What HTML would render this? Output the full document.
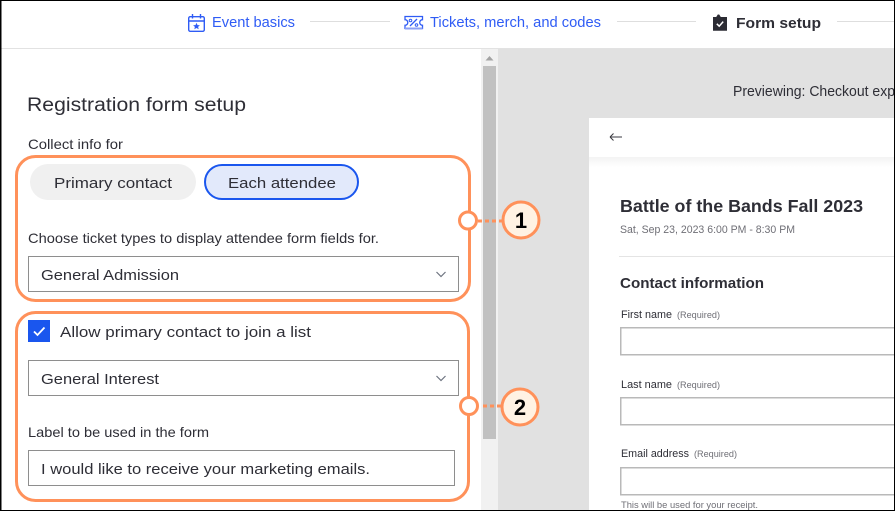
<!DOCTYPE html>
<html lang="en">
<head>
<meta charset="utf-8">
<title>Form setup</title>
<style>
html,body{margin:0;padding:0;width:895px;height:511px;overflow:hidden;background:#fff}
svg{display:block}
text{font-family:"Liberation Sans",sans-serif;fill:#2e2e36}
.b{fill:#2f5cf5}
.g{fill:#6f6f76}
</style>
</head>
<body>
<svg width="895" height="511" viewBox="0 0 895 511" xmlns="http://www.w3.org/2000/svg">
<defs>
<linearGradient id="sh" x1="0" y1="0" x2="0" y2="1"><stop offset="0" stop-color="#f3f3f3"/><stop offset="1" stop-color="#fff"/></linearGradient>
</defs>
<rect width="895" height="511" fill="#fff"/>

<!-- top nav -->
<rect x="0" y="48" width="895" height="1" fill="#e2e2e2"/>
<g fill="none" stroke="#2f5cf5" stroke-width="1.4">
<rect x="188.700" y="16.700" width="15.600" height="14.600" rx="1.500"/>
<path d="M189 21h15M192.500 14v4.500M200.500 14v4.500"/>
</g>
<path d="M196.500 22.800l1 2.300 2.400.2-1.800 1.600.6 2.400-2.200-1.300-2.200 1.300.6-2.400-1.800-1.600 2.400-.2z" fill="#2f5cf5"/>
<text x="212" y="27" font-size="14.500" class="b" textLength="83" lengthAdjust="spacingAndGlyphs">Event basics</text>
<rect x="310" y="21" width="80" height="1" fill="#dedede"/>

<g fill="none" stroke="#2f5cf5" stroke-width="1.3">
<path d="M405 16.500h17.500v3.200a2.800 2.800 0 0 0 0 5.600v3.200H405v-3.200a2.800 2.800 0 0 0 0-5.600z"/>
<path d="M410 26l7-7"/>
</g>
<rect x="405" y="27.500" width="17.500" height="2" fill="#8b9ff5"/>
<circle cx="410.500" cy="20.500" r="1.300" fill="none" stroke="#2f5cf5"/>
<circle cx="416.500" cy="25" r="1.300" fill="none" stroke="#2f5cf5"/>
<text x="430" y="27" font-size="14.500" class="b" textLength="171" lengthAdjust="spacingAndGlyphs">Tickets, merch, and codes</text>
<rect x="617" y="21" width="79" height="1" fill="#dedede"/>

<path d="M713 17h3.200l1-1.500a1.200 1.200 0 0 1 .8-1h1a1.200 1.200 0 0 1 .8 1l1 1.500h6.200v13.800h-14z" fill="#2b2b33"/>
<path d="M716.800 23.800l2.400 2.400 4-4.600" fill="none" stroke="#fff" stroke-width="1.500"/>
<text x="736" y="28" font-size="15" font-weight="700" textLength="85" lengthAdjust="spacingAndGlyphs">Form setup</text>
<rect x="837" y="21" width="58" height="1" fill="#dedede"/>

<!-- scrollbar -->
<rect x="481" y="49" width="17" height="462" fill="#f1f1f1"/>
<path d="M489.500 56l4 4.500h-8z" fill="#a3a3a3"/>
<rect x="483" y="66" width="13" height="373" fill="#c1c1c1"/>

<!-- preview -->
<rect x="498" y="49" width="397" height="462" fill="#e1e1e1"/>
<text x="733" y="96" font-size="14.500" textLength="162" lengthAdjust="spacingAndGlyphs">Previewing: Checkout exp</text>
<rect x="589" y="118" width="306" height="393" fill="#fff"/>
<rect x="589" y="157" width="306" height="10" fill="url(#sh)"/>
<path d="M610 137h12M610 137l3.500-3.500M610 137l3.500 3.500" fill="none" stroke="#3a3a40" stroke-width="1"/>

<text x="620" y="212" font-size="17.500" font-weight="700" textLength="243" lengthAdjust="spacingAndGlyphs">Battle of the Bands Fall 2023</text>
<text x="620" y="233" font-size="11" class="g" textLength="175" lengthAdjust="spacingAndGlyphs">Sat, Sep 23, 2023 6:00 PM - 8:30 PM</text>
<rect x="619" y="256" width="276" height="1" fill="#e4e4e4"/>
<text x="620" y="288" font-size="15" font-weight="700" textLength="144" lengthAdjust="spacingAndGlyphs">Contact information</text>

<text x="621" y="318" font-size="11" textLength="51" lengthAdjust="spacingAndGlyphs">First name</text>
<text x="677" y="318" font-size="9" class="g" textLength="43" lengthAdjust="spacingAndGlyphs">(Required)</text>
<rect x="620.750" y="327.750" width="290" height="27" fill="#fff" stroke="#b9b9b9" stroke-width="1.500"/>

<text x="621" y="388" font-size="11" textLength="51" lengthAdjust="spacingAndGlyphs">Last name</text>
<text x="677" y="388" font-size="9" class="g" textLength="43" lengthAdjust="spacingAndGlyphs">(Required)</text>
<rect x="620.750" y="397.750" width="290" height="27" fill="#fff" stroke="#b9b9b9" stroke-width="1.500"/>

<text x="621" y="457" font-size="11" textLength="68" lengthAdjust="spacingAndGlyphs">Email address</text>
<text x="694" y="457" font-size="9" class="g" textLength="43" lengthAdjust="spacingAndGlyphs">(Required)</text>
<rect x="620.750" y="467.750" width="290" height="27" fill="#fff" stroke="#b9b9b9" stroke-width="1.500"/>
<text x="621" y="508" font-size="9.500" class="g" textLength="137" lengthAdjust="spacingAndGlyphs">This will be used for your receipt.</text>

<!-- left panel -->
<text x="27" y="111" font-size="19" textLength="219" lengthAdjust="spacingAndGlyphs">Registration form setup</text>
<text x="28" y="149" font-size="14" textLength="95" lengthAdjust="spacingAndGlyphs">Collect info for</text>

<rect x="30" y="164" width="166" height="36" rx="18" fill="#f0f0f0"/>
<text x="54" y="188" font-size="15" textLength="118" lengthAdjust="spacingAndGlyphs">Primary contact</text>
<rect x="205" y="165" width="153" height="34" rx="17" fill="#e2e9fb" stroke="#1a56ee" stroke-width="2"/>
<text x="228" y="188" font-size="15" textLength="108" lengthAdjust="spacingAndGlyphs">Each attendee</text>

<text x="28" y="243" font-size="14" textLength="351" lengthAdjust="spacingAndGlyphs">Choose ticket types to display attendee form fields for.</text>
<rect x="28.500" y="256.500" width="430" height="35" fill="#fff" stroke="#8e8e8e" stroke-width="1"/>
<text x="41" y="280" font-size="15" textLength="138" lengthAdjust="spacingAndGlyphs">General Admission</text>
<path d="M436.500 272l4.500 4.500 4.500-4.500" fill="none" stroke="#6e7480" stroke-width="1.200"/>

<rect x="28" y="320" width="22" height="22" fill="#1a56ee"/>
<path d="M34 331.500l3.500 3.500 7-7.500" fill="none" stroke="#fff" stroke-width="1.800"/>
<text x="60" y="337" font-size="15" textLength="251" lengthAdjust="spacingAndGlyphs">Allow primary contact to join a list</text>

<rect x="28.500" y="360.500" width="430" height="35" fill="#fff" stroke="#8e8e8e" stroke-width="1"/>
<text x="41" y="384" font-size="15" textLength="118" lengthAdjust="spacingAndGlyphs">General Interest</text>
<path d="M436.500 376l4.500 4.500 4.500-4.500" fill="none" stroke="#6e7480" stroke-width="1.200"/>

<text x="28" y="437" font-size="14" textLength="181" lengthAdjust="spacingAndGlyphs">Label to be used in the form</text>
<rect x="28.500" y="450.500" width="426" height="35" fill="#fff" stroke="#8e8e8e" stroke-width="1"/>
<text x="41" y="474" font-size="15" textLength="329" lengthAdjust="spacingAndGlyphs">I would like to receive your marketing emails.</text>

<!-- annotations -->
<g fill="none" stroke="#ff915a" stroke-width="3">
<rect x="16.500" y="156.500" width="453" height="144" rx="19"/>
<rect x="16.500" y="312.500" width="452" height="188" rx="19"/>
</g>
<circle cx="468" cy="220.500" r="8.500" fill="#fff" stroke="#ff915a" stroke-width="3"/>
<path d="M478 221h24" fill="none" stroke="#ff915a" stroke-width="3" stroke-dasharray="4 3"/>
<circle cx="521" cy="220" r="18" fill="#fff2e3" stroke="#ff915a" stroke-width="3"/>
<text x="521" y="228" font-size="22" font-weight="700" text-anchor="middle" style="fill:#000">1</text>

<circle cx="469" cy="406" r="8.500" fill="#fff" stroke="#ff915a" stroke-width="3"/>
<path d="M483 406h18" fill="none" stroke="#ff915a" stroke-width="3" stroke-dasharray="4 3"/>
<circle cx="520" cy="407" r="18" fill="#fff2e3" stroke="#ff915a" stroke-width="3"/>
<text x="520" y="415" font-size="22" font-weight="700" text-anchor="middle" style="fill:#000">2</text>

<!-- frame -->
<rect x="0" y="0" width="895" height="1" fill="#000"/>
<rect x="0" y="510" width="895" height="1" fill="#000"/>
<rect x="0" y="0" width="1.500" height="511" fill="#000"/>
<rect x="894" y="0" width="1" height="511" fill="#000"/>
</svg>
</body>
</html>
